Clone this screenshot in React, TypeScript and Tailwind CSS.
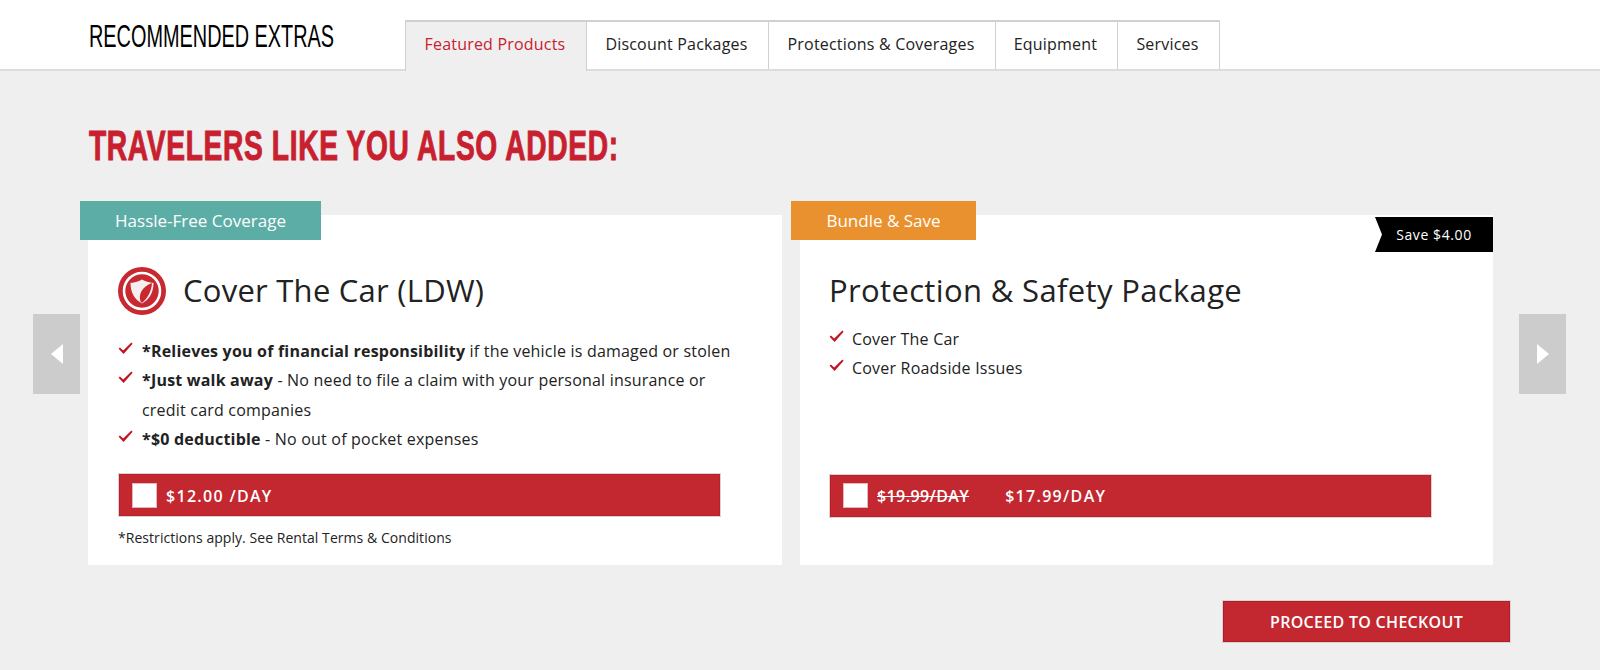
const open = "font-['Open_Sans',sans-serif]";

function Check() {
  return (
    <svg className="absolute left-0 top-[5px]" width="15" height="13" viewBox="0 0 15 13">
      <path d="M0.6 6.8 L1.9 5.4 L5.2 8.4 L13.4 0.6 L14.6 1.7 L5.6 12 Z" fill="#c4121f" />
    </svg>
  );
}

function Item({ children, pad = "pl-[24px]" }: { children: React.ReactNode; pad?: string }) {
  return (
    <li className={`relative ${pad}`}>
      <Check />
      {children}
    </li>
  );
}

function Shield() {
  return (
    <svg width="48" height="48" viewBox="0 0 48 48" className="shrink-0">
      <circle cx="24" cy="24" r="24" fill="#c8282f" />
      <circle cx="24" cy="24" r="18" fill="#c8282f" stroke="#fff" strokeWidth="2.6" />
      <path d="M12.5 16 C17 15.5 21 14.5 24 12.5 C27 14.5 31 15.5 35.5 16 C35.5 25 31.5 32.5 24 36.5 C16.5 32.5 12.5 25 12.5 16 Z" fill="#f6eeee" />
      <path d="M23 35.5 C19.5 28 24 19.5 34 16 C33.5 24 30 30.5 24.5 35.5 Z" fill="#c8282f" />
    </svg>
  );
}

function Arrow({ dir }: { dir: "l" | "r" }) {
  return (
    <div className="w-[47px] h-[80px] mt-[99px] bg-[#cccccc] flex items-center justify-center shrink-0">
      <svg width="12" height="20" viewBox="0 0 12 20">
        <path d={dir === "l" ? "M12 0 V20 L0 10 Z" : "M0 0 V20 L12 10 Z"} fill="#fff" />
      </svg>
    </div>
  );
}

function PriceBar({ children, w }: { children: React.ReactNode; w: string }) {
  return (
    <div className={`${w} h-[44px] bg-[#c3272f] border border-[#d5d5d5] flex items-center pl-[13px] text-white shadow-[inset_0_0_0_1px_#be1e28]`}>
      <span className="w-[25px] h-[25px] bg-white border border-[#e4b5b8] shrink-0" />
      {children}
    </div>
  );
}

export default function App() {
  const tabs = ["Discount Packages", "Protections & Coverages", "Equipment", "Services"];
  const tabW = ["w-[182px]", "w-[227px]", "w-[122px]", "w-[102px]"];
  return (
    <div className={`${open} w-[1600px] h-[670px] bg-[#efefef] overflow-hidden text-[#222]`}>
      <header className="h-[71px] bg-white border-b-2 border-[#dddddd] flex">
        <div className="w-[405px] pl-[89px] pt-[16px] text-black font-['Liberation_Sans',sans-serif] whitespace-nowrap">
          <span className="block origin-left scale-x-[0.621] text-[32px] leading-[40px]">RECOMMENDED EXTRAS</span>
        </div>
        <nav className="flex mt-[20px] h-[49px] text-[16px] tracking-[0.2px]">
          <div className="w-[182px] h-[51px] pb-[5px] pr-[2px] bg-[#efefef] border-t-2 border-x border-[#d0d0d0] text-[#c8202f] flex items-center justify-center">
            Featured Products
          </div>
          {tabs.map((t, i) => (
            <div key={t} className={`${tabW[i]} pb-[3px] pr-[2px] border-t-2 border-r border-[#d0d0d0] flex items-center justify-center whitespace-nowrap`}>
              {t}
            </div>
          ))}
        </nav>
      </header>

      <h1 className="pl-[89px] mt-[52px] h-[44px] font-bold text-[#c8202f] font-['Liberation_Sans',sans-serif] whitespace-nowrap">
        <span className="block origin-left scale-x-[0.655] text-[43px] leading-[44px] tracking-[1px] [-webkit-text-stroke:1px_#c8202f]">
          TRAVELERS LIKE YOU ALSO ADDED:
        </span>
      </h1>

      <div className="flex pl-[33px] mt-[48px] items-start">
        <Arrow dir="l" />
        <section className="relative ml-[8px] w-[694px] h-[350px] bg-white pl-[30px] pt-[52px] shrink-0">
          <div className="absolute -left-[8px] -top-[14px] w-[241px] h-[39px] bg-[#5cada6] text-white text-[17px] font-medium flex items-center justify-center">
            Hassle-Free Coverage
          </div>
          <div className="flex items-center gap-[17px] h-[48px]">
            <Shield />
            <h2 className="text-[31px] tracking-[0.25px] leading-[38px] pb-[2px]">Cover The Car (LDW)</h2>
          </div>
          <ul className="mt-[22px] w-[620px] text-[16px] leading-[29.3px] tracking-[0.2px] text-[#222]">
            <Item><b>*Relieves you of financial responsibility</b> if the vehicle is damaged or stolen</Item>
            <Item><b>*Just walk away</b> - No need to file a claim with your personal insurance or credit card companies</Item>
            <Item><b>*$0 deductible</b> - No out of pocket expenses</Item>
          </ul>
          <div className="mt-[19px]">
            <PriceBar w="w-[603px]">
              <span className="ml-[9px] text-[16px] font-semibold tracking-[1.3px] pt-[1px]">$12.00 /DAY</span>
            </PriceBar>
          </div>
          <p className="mt-[11px] text-[14px] leading-[20px] tracking-[0.05px]">*Restrictions apply. See Rental Terms &amp; Conditions</p>
        </section>

        <section className="relative ml-[18px] w-[693px] h-[350px] bg-white pl-[29px] pt-[52px] shrink-0">
          <div className="absolute -left-[9px] -top-[14px] w-[185px] h-[39px] bg-[#ea912f] text-white text-[17px] font-medium flex items-center justify-center">
            Bundle &amp; Save
          </div>
          <div className="absolute right-0 top-[2px] w-[118px] h-[35px] bg-black text-white text-[14px] tracking-[0.6px] flex items-center justify-center [clip-path:polygon(0_0,100%_0,100%_100%,0_100%,7px_50%)]">
            Save $4.00
          </div>
          <h2 className="h-[48px] text-[31px] tracking-[0.35px] leading-[46px]">Protection &amp; Safety Package</h2>
          <ul className="mt-[10px] text-[16px] leading-[29.3px] tracking-[0.2px]">
            <Item pad="pl-[23px]">Cover The Car</Item>
            <Item pad="pl-[23px]">Cover Roadside Issues</Item>
          </ul>
          <div className="mt-[90px]">
            <PriceBar w="w-[603px]">
              <span className="ml-[9px] text-[16px] font-semibold tracking-[0.4px] pt-[1px] line-through">$19.99/DAY</span>
              <span className="ml-[36px] text-[16px] font-semibold tracking-[1.3px] pt-[1px]">$17.99/DAY</span>
            </PriceBar>
          </div>
        </section>

        <div className="ml-[26px]"><Arrow dir="r" /></div>
      </div>

      <div className="flex justify-end pr-[89px] mt-[35px]">
        <button className="w-[289px] h-[43px] bg-[#c3272f] border border-[#d5d5d5] shadow-[inset_0_0_0_1px_#b71c26] text-white text-[16px] font-semibold tracking-[0.3px] flex items-center justify-center">
          PROCEED TO CHECKOUT
        </button>
      </div>
    </div>
  );
}
